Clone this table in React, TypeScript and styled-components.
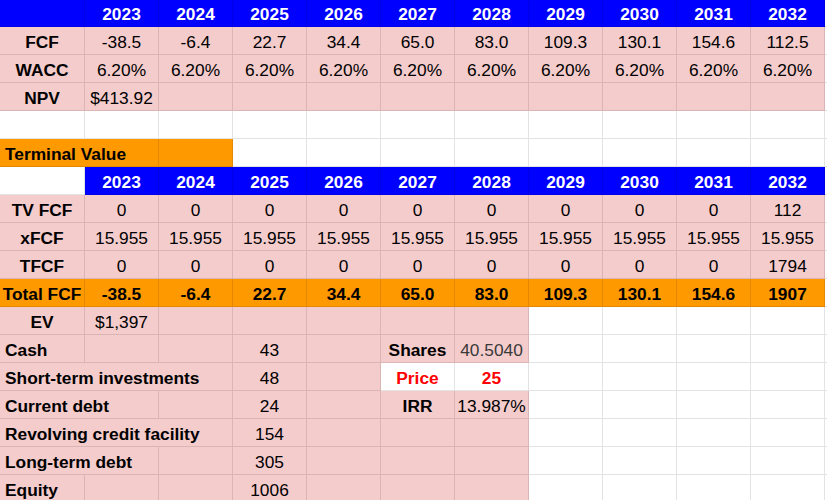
import React from 'react';
import styled, { createGlobalStyle } from 'styled-components';

const GlobalStyle = createGlobalStyle`
  html, body { margin: 0; padding: 0; background: #ffffff; overflow: hidden; }
  body { font-family: "Liberation Sans", Arial, sans-serif; }
`;

type Fill = 'blue' | 'pink' | 'orange' | 'white';

interface CellData {
  text?: string;
  fill: Fill;
  align?: 'left' | 'center';
  bold?: boolean;
  color?: string;
  span?: number;
}

const fills: Record<Fill, string> = {
  blue: '#0000ff',
  pink: '#f4cccc',
  orange: '#ff9900',
  white: '#ffffff',
};

const Sheet = styled.div`
  display: grid;
  grid-template-columns: 85px repeat(10, 74px) 1fr;
  grid-template-rows: 27px;
  grid-auto-rows: 28px;
  width: 100%;
  font-size: 17.33px;
  line-height: 20px;
  color: #000000;
`;

const Cell = styled.div<{
  $fill: Fill;
  $align: 'left' | 'center';
  $bold: boolean;
  $color: string;
  $span: number;
}>`
  grid-column: span ${(p) => p.$span};
  box-sizing: border-box;
  background: ${(p) => fills[p.$fill]};
  border-right: 1px solid rgba(0, 0, 0, 0.11);
  border-bottom: 1px solid rgba(0, 0, 0, 0.11);
  display: flex;
  align-items: flex-end;
  justify-content: ${(p) => (p.$align === 'left' ? 'flex-start' : 'center')};
  padding: 0 3px 2px ${(p) => (p.$align === 'left' ? '5px' : '3px')};
  font-weight: ${(p) => (p.$bold ? 700 : 400)};
  color: ${(p) => p.$color};
  white-space: nowrap;
  overflow: visible;
`;

const Filler = styled.div`
  box-sizing: border-box;
  background: #ffffff;
  border-bottom: 1px solid rgba(0, 0, 0, 0.11);
`;

const years = ['2023', '2024', '2025', '2026', '2027', '2028', '2029', '2030', '2031', '2032'];

const empty = (fill: Fill, n: number): CellData[] => Array.from({ length: n }, () => ({ fill }));
const label = (text: string, fill: Fill = 'pink'): CellData => ({ text, fill, bold: true });
const leftLabel = (text: string, span = 1): CellData => ({ text, fill: 'pink', bold: true, align: 'left', span });
const values = (list: string[], fill: Fill = 'pink', bold = false): CellData[] =>
  list.map((text) => ({ text, fill, bold }));
const yearHeader = (): CellData[] => years.map((text) => ({ text, fill: 'blue', bold: true, color: '#ffffff' }));

const rows: CellData[][] = [
  [{ fill: 'blue' }, ...yearHeader()],
  [label('FCF'), ...values(['-38.5', '-6.4', '22.7', '34.4', '65.0', '83.0', '109.3', '130.1', '154.6', '112.5'])],
  [label('WACC'), ...values(Array(10).fill('6.20%'))],
  [label('NPV'), { text: '$413.92', fill: 'pink' }, ...empty('pink', 9)],
  empty('white', 11),
  [
    { text: 'Terminal Value', fill: 'orange', bold: true, align: 'left', span: 2 },
    { fill: 'orange' },
    ...empty('white', 8),
  ],
  [{ fill: 'white' }, ...yearHeader()],
  [label('TV FCF'), ...values(['0', '0', '0', '0', '0', '0', '0', '0', '0', '112'])],
  [label('xFCF'), ...values(Array(10).fill('15.955'))],
  [label('TFCF'), ...values(['0', '0', '0', '0', '0', '0', '0', '0', '0', '1794'])],
  [
    label('Total FCF', 'orange'),
    ...values(['-38.5', '-6.4', '22.7', '34.4', '65.0', '83.0', '109.3', '130.1', '154.6', '1907'], 'orange', true),
  ],
  [label('EV'), { text: '$1,397', fill: 'pink' }, ...empty('pink', 5), ...empty('white', 4)],
  [
    leftLabel('Cash'),
    ...empty('pink', 2),
    { text: '43', fill: 'pink' },
    { fill: 'pink' },
    label('Shares'),
    { text: '40.5040', fill: 'pink', color: '#3a3a3a' },
    ...empty('white', 4),
  ],
  [
    leftLabel('Short-term investments', 3),
    { text: '48', fill: 'pink' },
    { fill: 'pink' },
    { text: 'Price', fill: 'white', bold: true, color: '#ff0000' },
    { text: '25', fill: 'white', bold: true, color: '#ff0000' },
    ...empty('white', 4),
  ],
  [
    leftLabel('Current debt', 2),
    { fill: 'pink' },
    { text: '24', fill: 'pink' },
    { fill: 'pink' },
    label('IRR'),
    { text: '13.987%', fill: 'pink' },
    ...empty('white', 4),
  ],
  [leftLabel('Revolving credit facility', 3), { text: '154', fill: 'pink' }, ...empty('pink', 3), ...empty('white', 4)],
  [leftLabel('Long-term debt', 2), { fill: 'pink' }, { text: '305', fill: 'pink' }, ...empty('pink', 3), ...empty('white', 4)],
  [leftLabel('Equity'), ...empty('pink', 2), { text: '1006', fill: 'pink' }, ...empty('pink', 3), ...empty('white', 4)],
];

export default function App() {
  return (
    <>
      <GlobalStyle />
      <Sheet>
        {rows.map((row, r) => (
          <React.Fragment key={r}>
            {row.map((c, i) => (
              <Cell
                key={i}
                $fill={c.fill}
                $align={c.align ?? 'center'}
                $bold={!!c.bold}
                $color={c.color ?? '#000000'}
                $span={c.span ?? 1}
              >
                {c.text}
              </Cell>
            ))}
            <Filler />
          </React.Fragment>
        ))}
      </Sheet>
    </>
  );
}
